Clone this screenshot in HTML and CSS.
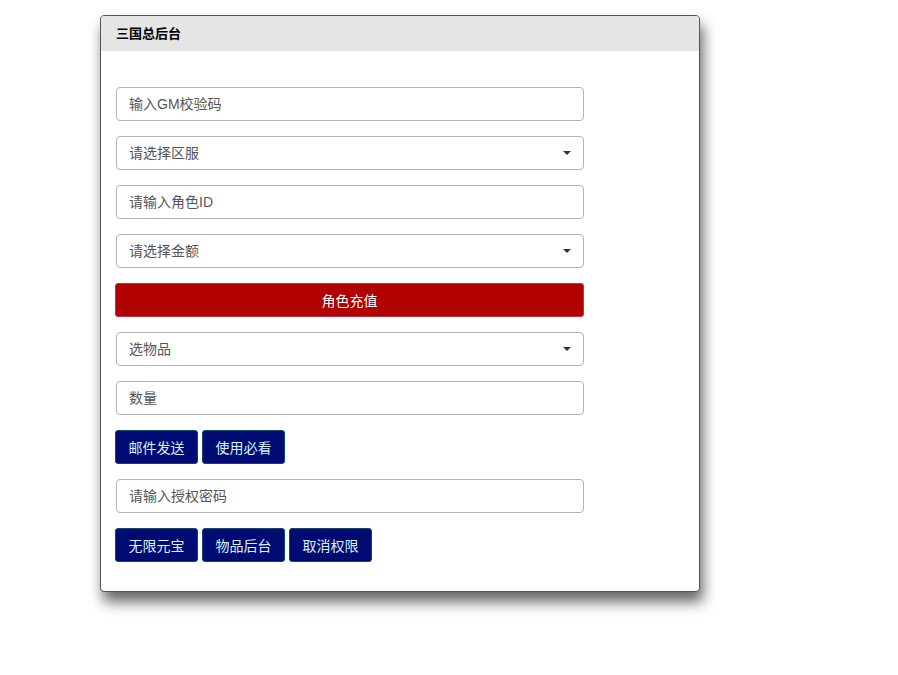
FILE: index.html
```html
<!DOCTYPE html>
<html lang="zh-CN">
<head>
<meta charset="UTF-8">
<title>三国总后台</title>
<link rel="stylesheet" href="styles.css">
</head>
<body>
<div class="panel">
    <div class="panel-head">三国总后台</div>
    <div class="panel-body">
        <input class="field" type="text" placeholder="输入GM校验码">
        <div class="select-wrap">
            <select class="field">
                <option>请选择区服</option>
            </select>
        </div>
        <input class="field" type="text" placeholder="请输入角色ID">
        <div class="select-wrap">
            <select class="field">
                <option>请选择金额</option>
            </select>
        </div>
        <button class="btn-red">角色充值</button>
        <div class="select-wrap">
            <select class="field">
                <option>选物品</option>
            </select>
        </div>
        <input class="field" type="text" placeholder="数量">
        <div class="btn-row">
            <button class="btn-blue">邮件发送</button>
            <button class="btn-blue">使用必看</button>
        </div>
        <input class="field" type="text" placeholder="请输入授权密码">
        <div class="btn-row">
            <button class="btn-blue">无限元宝</button>
            <button class="btn-blue">物品后台</button>
            <button class="btn-blue">取消权限</button>
        </div>
    </div>
</div>
</body>
</html>
```

FILE: styles.css
```css
* { box-sizing: border-box; }
html, body { background: #fff; }
body {
    margin: 0;
    min-height: 100vh;
    padding: 15px 0 40px 100px;
    font-family: "Liberation Sans", "Noto Sans CJK SC", sans-serif;
}
.panel {
    width: 600px;
    background: #fff;
    border: 1px solid #555;
    border-radius: 4px;
    box-shadow: 3px 10px 14px rgba(0,0,0,0.6);
    overflow: hidden;
}
.panel-head {
    height: 35px;
    line-height: 35px;
    padding-left: 15px;
    background: #e5e5e5;
    font-size: 13px;
    font-weight: bold;
    color: #000;
}
.panel-body {
    display: flex;
    flex-direction: column;
    gap: 15px;
    padding: 36px 15px 29px 15px;
}
.field {
    display: block;
    width: 468px;
    height: 34px;
    padding: 0 12px;
    border: 1px solid #b3b3b3;
    border-radius: 4px;
    background: #fff;
    font-family: inherit;
    font-size: 14px;
    color: #555;
    outline: none;
}
.field::placeholder { color: #555; }
select.field {
    -webkit-appearance: none;
    appearance: none;
}
.select-wrap {
    position: relative;
    width: 468px;
}
.select-wrap::after {
    content: "";
    position: absolute;
    right: 13px;
    top: 15px;
    border-left: 4px solid transparent;
    border-right: 4px solid transparent;
    border-top: 4px solid #333;
}
.btn-red {
    width: 469px;
    height: 34px;
    margin-left: -1px;
    border: 1px solid #b34;
    border-radius: 3px;
    background: #b00000;
    color: #fff;
    font-family: inherit;
    font-size: 14px;
}
.btn-row {
    display: flex;
    gap: 4px;
    margin-left: -1px;
}
.btn-blue {
    width: 83px;
    height: 34px;
    border: 1px solid #0a4a6a;
    border-radius: 3px;
    background: #000a73;
    color: #d6f4ff;
    font-family: inherit;
    font-size: 14px;
}
```
